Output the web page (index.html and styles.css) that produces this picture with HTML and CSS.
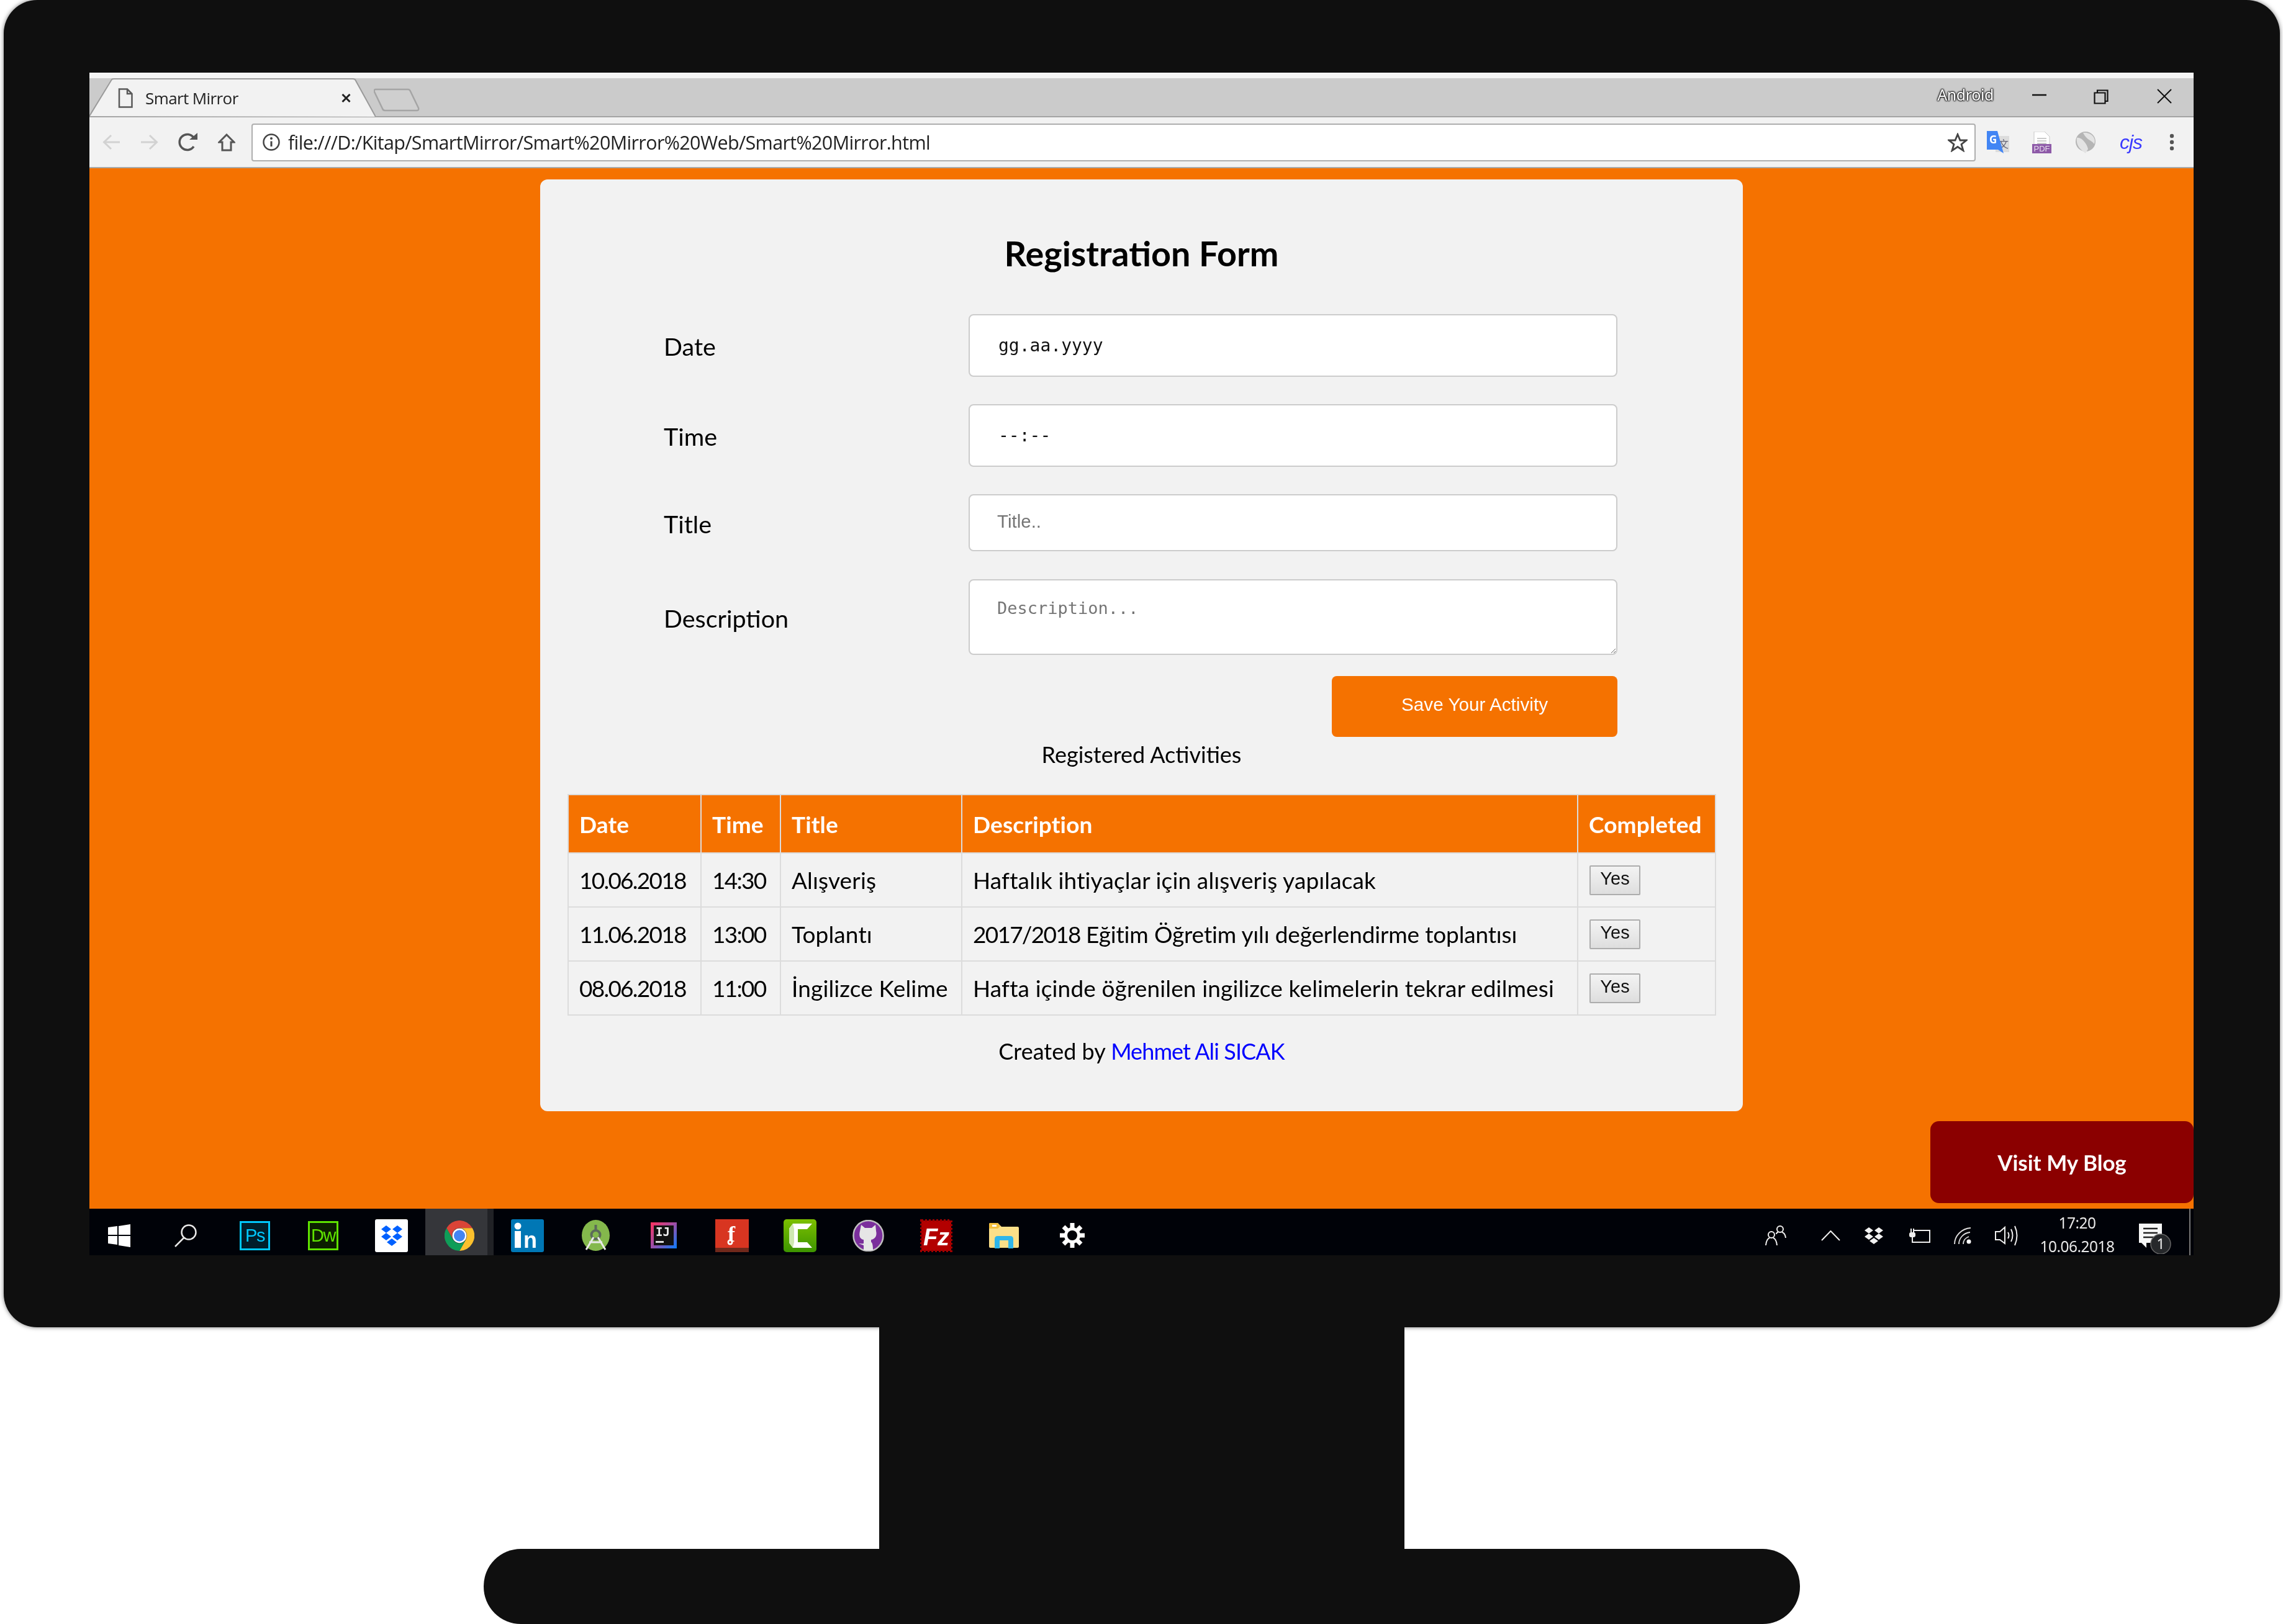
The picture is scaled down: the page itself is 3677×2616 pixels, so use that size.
FILE: index.html
```html
<!DOCTYPE html>
<html lang="tr">
<head>
<meta charset="utf-8">
<title>Smart Mirror</title>
<link rel="stylesheet" href="styles.css">
</head>
<body>
<div class="monitor">
  <div class="screen">
    <div class="top-band"></div>
    <div class="strip">
      <div class="tab">
        <svg class="tab-shape" width="461" height="63" viewBox="0 0 461 63"><path d="M0 61 L36 2 Q37 1 40 1 H424 Q428 1 429 4 L461 62" fill="#f2f2f2" stroke="#9a9a9a" stroke-width="2"/></svg>
        <svg class="tab-doc" width="24" height="32" viewBox="0 0 24 32"><path d="M2 1.500H15L22.500 9V30.500H2Z M15 1.500V9H22.500" fill="none" stroke="#5a5a5a" stroke-width="2.500"/></svg>
        <span class="tab-title">Smart Mirror</span>
        <svg class="tab-close" width="15" height="14" viewBox="0 0 15 14"><path d="M1.500 1L13.500 13M13.500 1L1.500 13" stroke="#222" stroke-width="3"/></svg>
      </div>
      <svg class="new-tab" width="75" height="38" viewBox="0 0 75 38"><path d="M3 2H55Q58 2 59 5L72 32Q73 36 69 36H18Q15 36 14 33L1 6Q0 2 3 2Z" fill="#cfcfcf" stroke="#a5a5a5" stroke-width="2.500"/></svg>
      <span class="profile">Android</span>
      <svg class="win-min" width="23" height="4" viewBox="0 0 23 4"><path d="M0 2H23" stroke="#111" stroke-width="2.500"/></svg>
      <svg class="win-max" width="24" height="24" viewBox="0 0 24 24"><path d="M6 5V1.500H22.500V19H19M1.500 5.500H18.500V22.500H1.500Z" fill="none" stroke="#111" stroke-width="2.200"/></svg>
      <svg class="win-close" width="24" height="24" viewBox="0 0 24 24"><path d="M1 1L23 23M23 1L1 23" stroke="#111" stroke-width="2"/></svg>
    </div>
    <div class="toolbar">
      <div class="nav">
        <svg width="29" height="26" viewBox="0 0 29 26"><path d="M28 13H3M14 2L2.500 13L14 24" fill="none" stroke="#d2d2d2" stroke-width="3"/></svg>
        <svg width="29" height="26" viewBox="0 0 29 26"><path d="M1 13H26M15 2L26.500 13L15 24" fill="none" stroke="#d2d2d2" stroke-width="3"/></svg>
        <svg width="32" height="30" viewBox="0 0 32 30"><path d="M25 22A12.500 12.500 0 1 1 25 8" fill="none" stroke="#555" stroke-width="3.500"/><path d="M18 11H31V0Z" fill="#555"/></svg>
        <svg width="28" height="29" viewBox="0 0 28 29"><path d="M14 2L26 14H21V27H7V14H2Z" fill="none" stroke="#555" stroke-width="3"/></svg>
      </div>
      <div class="address">
        <svg width="30" height="30" viewBox="0 0 30 30"><circle cx="15" cy="15" r="12.500" fill="none" stroke="#444" stroke-width="2.500"/><path d="M15 13.500V22" stroke="#444" stroke-width="3"/><circle cx="15" cy="9" r="2" fill="#444"/></svg>
        <span class="url">file:///D:/Kitap/SmartMirror/Smart%20Mirror%20Web/Smart%20Mirror.html</span>
        <svg class="star" width="32" height="31" viewBox="0 0 32 31"><path d="M16 2.500L20 12H30L22 18.500L25 28.500L16 22.500L7 28.500L10 18.500L2 12H12Z" fill="none" stroke="#444" stroke-width="2.800"/></svg>
      </div>
      <div class="exts">
        <svg width="36" height="36" viewBox="0 0 36 36"><rect x="14" y="8" width="22" height="26" fill="#dcdcdc"/><text class="ext-x" x="19" y="27">文</text><path d="M0 0H17L27 36L18 30H0Z" fill="#4285f4"/><text class="ext-g" x="4" y="20">G</text></svg>
        <svg width="31" height="35" viewBox="0 0 31 35"><path d="M3 0H20L28 8V24H3Z" fill="#fff" stroke="#c8c8c8"/><path d="M8 11H23M8 15H23M8 19H23" stroke="#bbb" stroke-width="1.500"/><rect y="20" width="31" height="15" fill="#8e5aa8"/><text class="ext-pdf" x="15.500" y="32">PDF</text></svg>
        <svg width="36" height="35" viewBox="0 0 36 35"><circle cx="18" cy="16" r="16" fill="#b5b5b5"/><path d="M14 2C26 0 36 10 32 20C28 14 20 14 14 2ZM4 10C10 8 20 18 22 28L18 35C12 30 2 24 4 10Z" fill="#e3e3e3"/></svg>
        <span class="cjs">cjs</span>
        <svg class="dots" width="8" height="28" viewBox="0 0 8 28"><circle cx="4" cy="4" r="3.200" fill="#555"/><circle cx="4" cy="14" r="3.200" fill="#555"/><circle cx="4" cy="24" r="3.200" fill="#555"/></svg>
      </div>
    </div>
    <div class="page">
      <main class="card">
        <h1 class="card-title">Registration Form</h1>
        <form class="form">
          <div class="row row-date"><label class="label">Date</label><input class="field field-mono" type="text" value="gg.aa.yyyy" readonly></div>
          <div class="row row-date"><label class="label">Time</label><input class="field field-mono" type="text" value="--:--" readonly></div>
          <div class="row row-title"><label class="label">Title</label><input class="field field-sans" type="text" placeholder="Title.."></div>
          <div class="row row-desc"><label class="label">Description</label><textarea class="field field-area" placeholder="Description..."></textarea></div>
          <div class="row-submit"><button class="save" type="button">Save Your Activity</button></div>
        </form>
        <p class="table-caption">Registered Activities</p>
        <table class="activities">
          <colgroup><col class="c1"><col class="c2"><col class="c3"><col class="c4"><col class="c5"></colgroup>
          <thead><tr><th>Date</th><th>Time</th><th>Title</th><th>Description</th><th>Completed</th></tr></thead>
          <tbody>
            <tr><td class="num">10.06.2018</td><td class="num">14:30</td><td>Alışveriş</td><td>Haftalık ihtiyaçlar için alışveriş yapılacak</td><td><button class="yes" type="button">Yes</button></td></tr>
            <tr><td class="num">11.06.2018</td><td class="num">13:00</td><td>Toplantı</td><td class="tight"><span class="num">2017/2018</span> Eğitim Öğretim yılı değerlendirme toplantısı</td><td><button class="yes" type="button">Yes</button></td></tr>
            <tr><td class="num">08.06.2018</td><td class="num">11:00</td><td>İngilizce Kelime</td><td>Hafta içinde öğrenilen ingilizce kelimelerin tekrar edilmesi</td><td><button class="yes" type="button">Yes</button></td></tr>
          </tbody>
        </table>
        <p class="credit">Created by <a class="credit-link" href="#">Mehmet Ali SICAK</a></p>
      </main>
      <a class="visit" href="#">Visit My Blog</a>
    </div>
    <div class="taskbar">
      <div class="slots">
        <div class="slot slot-win"><svg width="36" height="37" viewBox="0 0 36 37"><path d="M0 5L15 3V17H0ZM17 3L36 0V17H17ZM0 19H15V33L0 31ZM17 19H36V37L17 34Z" fill="#fff"/></svg></div>
        <div class="slot slot-search"><svg width="37" height="37" viewBox="0 0 37 37"><circle cx="24" cy="13" r="11.500" fill="none" stroke="#e8e8e8" stroke-width="2.500"/><path d="M16 22L2 36" stroke="#e8e8e8" stroke-width="2.500"/></svg></div>
        <div class="slot"><svg width="49" height="47" viewBox="0 0 49 47"><rect x="1.500" y="1.500" width="46" height="44" fill="#001e2b" stroke="#00c8ff" stroke-width="3"/><text class="app-adobe ps" x="24.500" y="33">Ps</text></svg></div>
        <div class="slot"><svg width="49" height="47" viewBox="0 0 49 47"><rect x="1.500" y="1.500" width="46" height="44" fill="#0c1f00" stroke="#5fe300" stroke-width="3"/><text class="app-adobe dw" x="24.500" y="33">Dw</text></svg></div>
        <div class="slot"><svg width="53" height="53" viewBox="0 0 53 53"><rect width="53" height="53" rx="3" fill="#fff"/><path d="M18 10L26 16L18 22L10 16ZM36 10L44 16L36 22L28 16ZM18 22L26 28L18 34L10 28ZM36 22L44 28L36 34L28 28ZM27 31L35 37L27 43L19 37Z" fill="#0061ff"/></svg></div>
        <div class="slot slot-active"><svg width="48" height="49" viewBox="0 0 48 48" preserveAspectRatio="none"><path d="M3.200 12A24 24 0 0 1 44.800 12H24A12 12 0 0 0 13.600 30Z" fill="#db4437"/><path d="M44.800 12A24 24 0 0 1 24 48L34.400 30A12 12 0 0 0 24 12H44.800Z" fill="#fbc02d"/><path d="M3.200 12L13.600 30A12 12 0 0 0 34.400 30L24 48A24 24 0 0 1 3.200 12Z" fill="#0f9d58"/><circle cx="24" cy="24" r="11.500" fill="#fff"/><circle cx="24" cy="24" r="9" fill="#4285f4"/></svg></div>
        <div class="slot"><svg width="53" height="53" viewBox="0 0 53 53"><rect width="53" height="53" rx="3" fill="#0077b5"/><circle cx="11" cy="11" r="5.500" fill="#fff"/><rect x="6" y="19" width="10" height="27" fill="#fff"/><text class="app-n" x="20" y="46">n</text></svg></div>
        <div class="slot"><svg width="45" height="50" viewBox="0 0 45 50"><ellipse cx="22.500" cy="25" rx="22.500" ry="25" fill="#84b84c"/><circle cx="22.500" cy="24" r="7" fill="none" stroke="#5b6a5a" stroke-width="4"/><path d="M22.500 8V16" stroke="#5b6a5a" stroke-width="4"/><path d="M19 28L7 48M26 28L38 48M12 36H33" stroke="#e9e9e9" stroke-width="3" fill="none"/></svg></div>
        <div class="slot"><svg width="42" height="42" viewBox="0 0 42 42"><defs><linearGradient id="ij" x1="0" y1="0" x2="1" y2="1"><stop offset="0" stop-color="#fe315d"/><stop offset=".5" stop-color="#9a4fa8"/><stop offset="1" stop-color="#087cfa"/></linearGradient></defs><rect width="42" height="42" fill="url(#ij)"/><rect x="5" y="5" width="32" height="32" fill="#111"/><text class="app-ij" x="8" y="22">IJ</text><rect x="8" y="30" width="13" height="3" fill="#ddd"/></svg></div>
        <div class="slot"><svg width="54" height="53" viewBox="0 0 54 53"><rect width="54" height="53" fill="#d83521"/><rect y="46" width="54" height="7" fill="#70281b"/><text class="app-f" x="26" y="36">f</text><circle cx="24" cy="37" r="4.500" fill="#fff"/><circle cx="24" cy="37" r="1.800" fill="#d83521"/></svg></div>
        <div class="slot"><svg width="53" height="53" viewBox="0 0 53 53"><defs><linearGradient id="cam" x1="0" y1="0" x2="0" y2="1"><stop offset="0" stop-color="#7cc000"/><stop offset="1" stop-color="#3d9400"/></linearGradient></defs><rect width="53" height="53" rx="5" fill="url(#cam)"/><path d="M15 7H46L38 16H23V37H38L46 46H15L9 38V15Z" fill="#fff"/><path d="M15 7L9 15V38L15 46L17 37V16Z" fill="#cfe8b0"/></svg></div>
        <div class="slot"><svg width="51" height="51" viewBox="0 0 51 51"><ellipse cx="25.500" cy="25.500" rx="24" ry="24.500" fill="#7b2f9c" stroke="#c0c0c0" stroke-width="2.500"/><path d="M14 8L20 13H31L37 8L38 18C40 26 36 31 30 32V36C32 36 33 42 33 49H18V41L10 38C14 38 15 39 18 38V32C12 31 10 26 12 18Z" fill="#e6e6e6"/></svg></div>
        <div class="slot"><svg width="52" height="53" viewBox="0 0 52 53"><rect x="2" y="2" width="48" height="49" fill="#b30000" stroke="#a00000" stroke-width="4" stroke-dasharray="3 3"/><text class="app-fz" x="26" y="42">Fz</text></svg></div>
        <div class="slot"><svg width="48" height="41" viewBox="0 0 48 41"><path d="M0 2Q0 0 2 0H14L20 6H46Q48 6 48 8V38Q48 40 46 40H2Q0 40 0 38Z" fill="#fbdf88"/><path d="M0 2Q0 0 2 0H14L18 5L14 9H0Z" fill="#f3bf3d"/><rect x="5" y="3" width="7" height="3" fill="#fff"/><path d="M9 41V26Q9 21 14 21H34Q39 21 39 26V41H31V28H17V41Z" fill="#2fb6ea"/></svg></div>
        <div class="slot"><svg width="40" height="40" viewBox="0 0 40 40"><g stroke="#fff" stroke-width="7"><path d="M20 0V40M0 20H40M6 6L34 34M34 6L6 34"/></g><circle cx="20" cy="20" r="13" fill="#fff"/><circle cx="20" cy="20" r="8" fill="#000208"/></svg></div>
      </div>
      <div class="tray">
        <svg width="34" height="33" viewBox="0 0 34 33"><g fill="none" stroke="#f0f0f0" stroke-width="2"><circle cx="24" cy="6" r="5"/><path d="M18 14Q18 11 21 11M27 11Q32 12 33 20"/><circle cx="10" cy="15" r="5"/><path d="M1 32Q2 22 7 20M13 20Q18 22 19 32"/></g></svg>
        <svg class="tray-chevron" width="31" height="17" viewBox="0 0 31 17"><path d="M1 16L15.500 1L30 16" fill="none" stroke="#f0f0f0" stroke-width="2"/></svg>
        <svg width="32" height="27" viewBox="0 0 32 27"><path d="M8 0L15 5L8 10L1 5ZM24 0L31 5L24 10L17 5ZM8 10L15 15L8 20L1 15ZM24 10L31 15L24 20L17 15ZM16 17L23 22L16 27L9 22Z" fill="#f2f2f2"/></svg>
        <svg width="37" height="23" viewBox="0 0 37 23"><path d="M9 3H36V22H9M6 0V6M10 0V6" fill="none" stroke="#eee" stroke-width="2"/><rect x="3" y="6" width="10" height="8" rx="3" fill="#eee"/><path d="M8 14V23" stroke="#eee" stroke-width="2"/></svg>
        <svg width="28" height="27" viewBox="0 0 28 27"><g fill="none" stroke="#ddd" stroke-width="1.800"><path d="M1 27C1 14 12 2 27 1M8 27C8 18 15 9 26 8M15 27C15 22 18 17 24 15"/></g><circle cx="24" cy="23" r="3.500" fill="#fff"/></svg>
        <svg width="37" height="33" viewBox="0 0 37 33"><path d="M1 10H8L16 3V29L8 23H1Z" fill="none" stroke="#eee" stroke-width="2"/><path d="M21 11Q24 16 21 21M26 6Q31 16 26 26M32 1Q39 16 32 32" fill="none" stroke="#eee" stroke-width="2"/></svg>
        <div class="clock"><span class="clock-line">17:20</span><span class="clock-line">10.06.2018</span></div>
        <svg class="notify" width="56" height="49" viewBox="0 0 56 49"><path d="M0 0H37V31H12V39L4 31H0Z" fill="#f7f7f7"/><path d="M7 8H30M7 15H30M7 22H24" stroke="#222" stroke-width="2.500"/><circle cx="35" cy="33" r="16" fill="#26282b" stroke="#666" stroke-width="1.500"/><text class="notify-n" x="35" y="41">1</text></svg>
      </div>
      <div class="tray-rule"></div>
    </div>
  </div>
</div>
<div class="neck"></div>
<div class="base"></div>
</body>
</html>
```

FILE: styles.css
```css
* { box-sizing: border-box; }
html, body { margin: 0; padding: 0; background: #fff; }
body { width: 3677px; height: 2616px; overflow: hidden; font-family: "Lato", "Noto Sans", sans-serif; color: #000; }
svg { display: block; flex: none; }

.monitor { margin-left: 6px; width: 3666px; height: 2138px; padding: 117px 139px 0 138px; background: #0f0f0f; border-radius: 54px; box-shadow: 0 0 7px rgba(0,0,0,.55); }
.neck { width: 846px; height: 357px; margin: 0 auto; background: #0f0f0f; }
.base { width: 2120px; height: 121px; margin: 0 auto; background: #0f0f0f; border-radius: 60px; }

.screen { width: 3389px; height: 1905px; display: flex; flex-direction: column; overflow: hidden; background: #000; filter: blur(.6px); }
.top-band { height: 9px; background: #f4f4f4; flex: none; }

.strip { height: 63px; flex: none; display: flex; align-items: flex-start; background: #cbcbcb; border-bottom: 2px solid #a3a3a3; }
.tab { position: relative; width: 461px; height: 63px; flex: none; display: flex; align-items: center; padding: 0 40px 0 46px; }
.tab-shape { position: absolute; left: 0; top: 0; }
.tab-doc, .tab-title, .tab-close { position: relative; }
.tab-title { margin-left: 20px; font: 26px/1 "Open Sans", sans-serif; color: #222; white-space: nowrap; letter-spacing: -.6px; }
.tab-close { margin-left: auto; }
.new-tab { margin: 16px 0 0 -3px; }
.profile { margin: 14px 0 0 auto; font: 25px/1 "Noto Sans", sans-serif; color: #fff; text-shadow: 0 0 2px #111, 0 0 2px #111, 0 0 3px #111, 0 0 3px #111; letter-spacing: -.4px; }
.win-min { margin: 25px 0 0 62px; }
.win-max { margin: 18px 0 0 76px; }
.win-close { margin: 17px 35px 0 78px; }

.toolbar { height: 82px; flex: none; display: flex; align-items: center; background: #f2f2f2; border-bottom: 2px solid #a8a8a8; }
.nav { width: 261px; flex: none; display: flex; align-items: center; gap: 32px; padding-left: 21px; }
.address { width: 777px; flex: 1 1 auto; height: 61px; display: flex; align-items: center; gap: 12px; background: #fff; border: 2px solid #aeaeae; border-radius: 4px; padding: 0 11px 0 15px; }
.url { font: 30.500px/1 "Open Sans", sans-serif; color: #222; white-space: nowrap; letter-spacing: -.64px; }
.star { margin-left: auto; }
.exts { width: 351px; flex: none; display: flex; align-items: center; gap: 37px; padding-left: 18px; }
.ext-g { font: bold 17px "Noto Sans", sans-serif; fill: #fff; }
.ext-x { font: 16px "Noto Sans CJK SC", sans-serif; fill: #667; }
.ext-pdf { font: 13px "Liberation Sans", sans-serif; fill: #e6dcec; text-anchor: middle; }
.cjs { width: 35px; font: italic 32px/1 "Liberation Sans", sans-serif; color: #3a3aff; letter-spacing: -1px; }
.dots { margin-left: 8px; }

.page { position: relative; height: 1676px; flex: none; display: flex; flex-direction: column; align-items: center; padding-top: 18px; background: #f57200; }
.card { width: 1937px; height: 1501px; padding: 0 44px; background: #f2f2f2; border-radius: 12px; }
.card-title { height: 217px; margin: 0; padding-top: 20px; display: flex; align-items: center; justify-content: center; font-size: 55.700px; font-weight: 700; }
.form { padding: 0 158px 0 155px; }
.row { display: flex; align-items: center; margin-bottom: 44px; }
.row-date { height: 101px; }
.row-title { height: 92px; margin-bottom: 45px; }
.row-desc { height: 122px; margin-bottom: 34px; }
.label { width: 491px; flex: none; font-size: 39.500px; padding-top: 2px; }
.field { flex: 1; height: 100%; background: #fff; border: 2px solid #ccc; border-radius: 8px; padding: 0 44px; outline: none; color: #111; }
.field-mono { font: 28px "DejaVu Sans Mono", monospace; padding-left: 46px; }
.field-sans { font: 29.500px "Liberation Sans", sans-serif; padding-bottom: 4px; }
.field-sans::placeholder { color: #757575; }
.field-area { font: 27px/36px "DejaVu Sans Mono", monospace; padding-top: 27px; }
.field-area::placeholder { color: #757575; }
.row-submit { display: flex; justify-content: flex-end; }
.save { width: 460px; height: 98px; border: 0; border-radius: 8px; background: #f57200; color: #fff; font: 29.700px "Liberation Sans", sans-serif; padding: 0 0 6px; }
.table-caption { margin: 0 0 36px; height: 56px; line-height: 56px; text-align: center; font-size: 36px; }

.activities { width: 1848px; table-layout: fixed; border-collapse: collapse; font-size: 37px; letter-spacing: .14px; }
.c1 { width: 214px; } .c2 { width: 128px; } .c3 { width: 292px; } .c4 { width: 992px; } .c5 { width: 222px; }
.activities th, .activities td { border: 2px solid #dcdcdc; padding: 0 0 0 17px; text-align: left; white-space: nowrap; }
.activities th { height: 94px; background: #f57200; color: #fff; font-weight: 700; }
.activities td { height: 87px; }
.activities .num { letter-spacing: -1.750px; }
.activities .tight { letter-spacing: -.15px; }
.yes { display: block; width: 82px; height: 48px; margin-left: 1px; padding: 0 0 4px; background: linear-gradient(#f3f3f3, #dedede); border: 2px solid #adadad; border-radius: 2px; font: 29px "Liberation Sans", sans-serif; color: #111; letter-spacing: 0; }
.credit { margin: 29px 0 0; height: 56px; line-height: 56px; text-align: center; font-size: 36px; }
.credit-link { color: #00f; text-decoration: none; letter-spacing: -.9px; }

.visit { position: absolute; right: 0; bottom: 9px; width: 424px; height: 132px; display: flex; align-items: center; justify-content: center; background: #8b0000; border-radius: 14px; color: #fff; font-size: 35px; font-weight: 700; text-decoration: none; }

.taskbar { height: 75px; flex: none; display: flex; align-items: stretch; background: #000208; }
.slots { display: flex; }
.slot { width: 109.700px; flex: none; display: flex; align-items: center; justify-content: center; padding-top: 11px; }
.slot-win { width: 96px; }
.slot-search { width: 116px; }
.slot-active { background: linear-gradient(90deg, #35363a 0, #35363a 91%, #212226 91%); }
.app-adobe { font: 29px "Liberation Sans", sans-serif; text-anchor: middle; letter-spacing: -1.500px; }
.ps { fill: #00c8ff; }
.dw { fill: #5fe300; }
.app-n { font: bold 36px "Liberation Sans", sans-serif; fill: #fff; }
.app-ij { font: bold 19px "DejaVu Sans Mono", monospace; fill: #eee; }
.app-f { font: 700 36px "Liberation Serif", serif; fill: #fff; text-anchor: middle; }
.app-fz { font: italic 700 38px "Liberation Sans", sans-serif; fill: #fff; text-anchor: middle; }

.tray { margin-left: auto; display: flex; align-items: center; gap: 38px; padding-top: 11px; }
.tray-chevron { margin-left: 18px; }
.clock { display: flex; flex-direction: column; align-items: center; justify-content: space-between; width: 123px; height: 58px; margin: 0 0 2px -4px; font: 24.500px/20px "Noto Sans", sans-serif; color: #e8e8e8; letter-spacing: -.5px; }
.clock-line { display: block; white-space: nowrap; }
.notify { margin-top: 11px; }
.notify-n { font: 23px "Noto Sans", sans-serif; fill: #eee; text-anchor: middle; }
.tray-rule { width: 2px; margin: 0 5px 0 25px; background: #777; }
```
